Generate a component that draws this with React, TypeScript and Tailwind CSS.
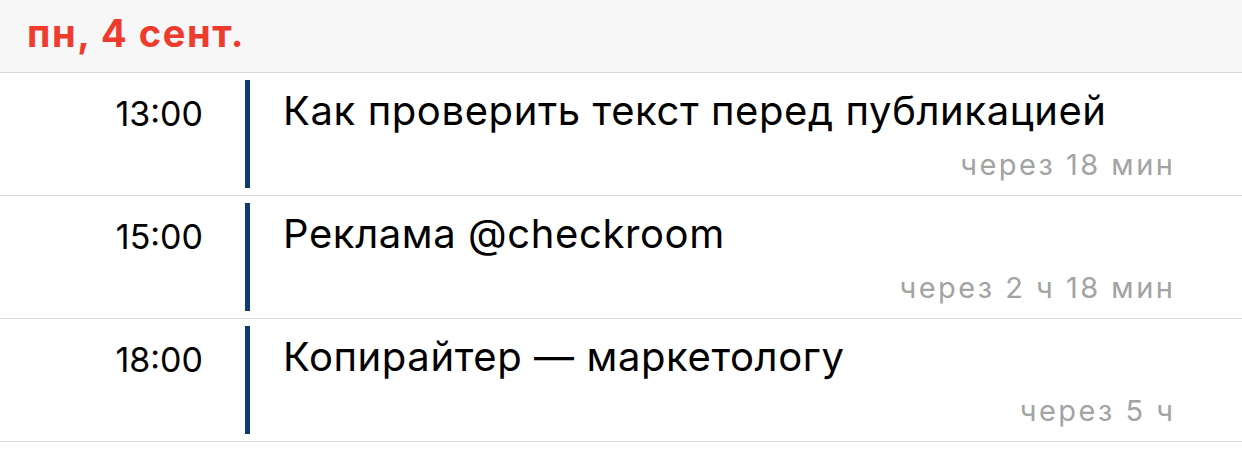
import React from 'react';

interface EventItem {
  time: string;
  title: string;
  eta: string;
}

const events: EventItem[] = [
  { time: '13:00', title: 'Как проверить текст перед публикацией', eta: 'через 18 мин' },
  { time: '15:00', title: 'Реклама @checkroom', eta: 'через 2 ч 18 мин' },
  { time: '18:00', title: 'Копирайтер — маркетологу', eta: 'через 5 ч' },
];

const EventRow: React.FC<{ item: EventItem }> = ({ item }) => {
  return (
    <div className="flex h-[123px] border-b border-[#d9d9d9]">
      <div className="w-[245px] shrink-0 pr-[42px] pt-[17px] text-right text-[34px] leading-[48px] text-black">
        {item.time}
      </div>
      <div className="my-[7px] w-[5px] shrink-0 bg-[#0e3b6f]"></div>
      <div className="flex flex-1 flex-col pl-[33px] pr-[69px] pt-[14px]">
        <div className="truncate text-[40px] leading-[48px] tracking-[0.6px] text-black">{item.title}</div>
        <div className="mt-[14px] mr-[-2.5px] text-right text-[29px] leading-[32px] tracking-[2.5px] text-[#a3a3a3]">
          {item.eta}
        </div>
      </div>
    </div>
  );
};

export default function App() {
  return (
    <div className="h-[462px] w-[1242px] overflow-hidden bg-white font-['Inter',sans-serif]">
      <div className="flex h-[73px] items-start border-b border-[#d9d9d9] bg-[#f7f7f7] pl-[27px] pt-[9px]">
        <span className="text-[38px] font-bold leading-[48px] tracking-[1.6px] text-[#ef3a2e]">пн, 4 сент.</span>
      </div>
      {events.map((e, i) => (
        <EventRow key={i} item={e} />
      ))}
    </div>
  );
}
